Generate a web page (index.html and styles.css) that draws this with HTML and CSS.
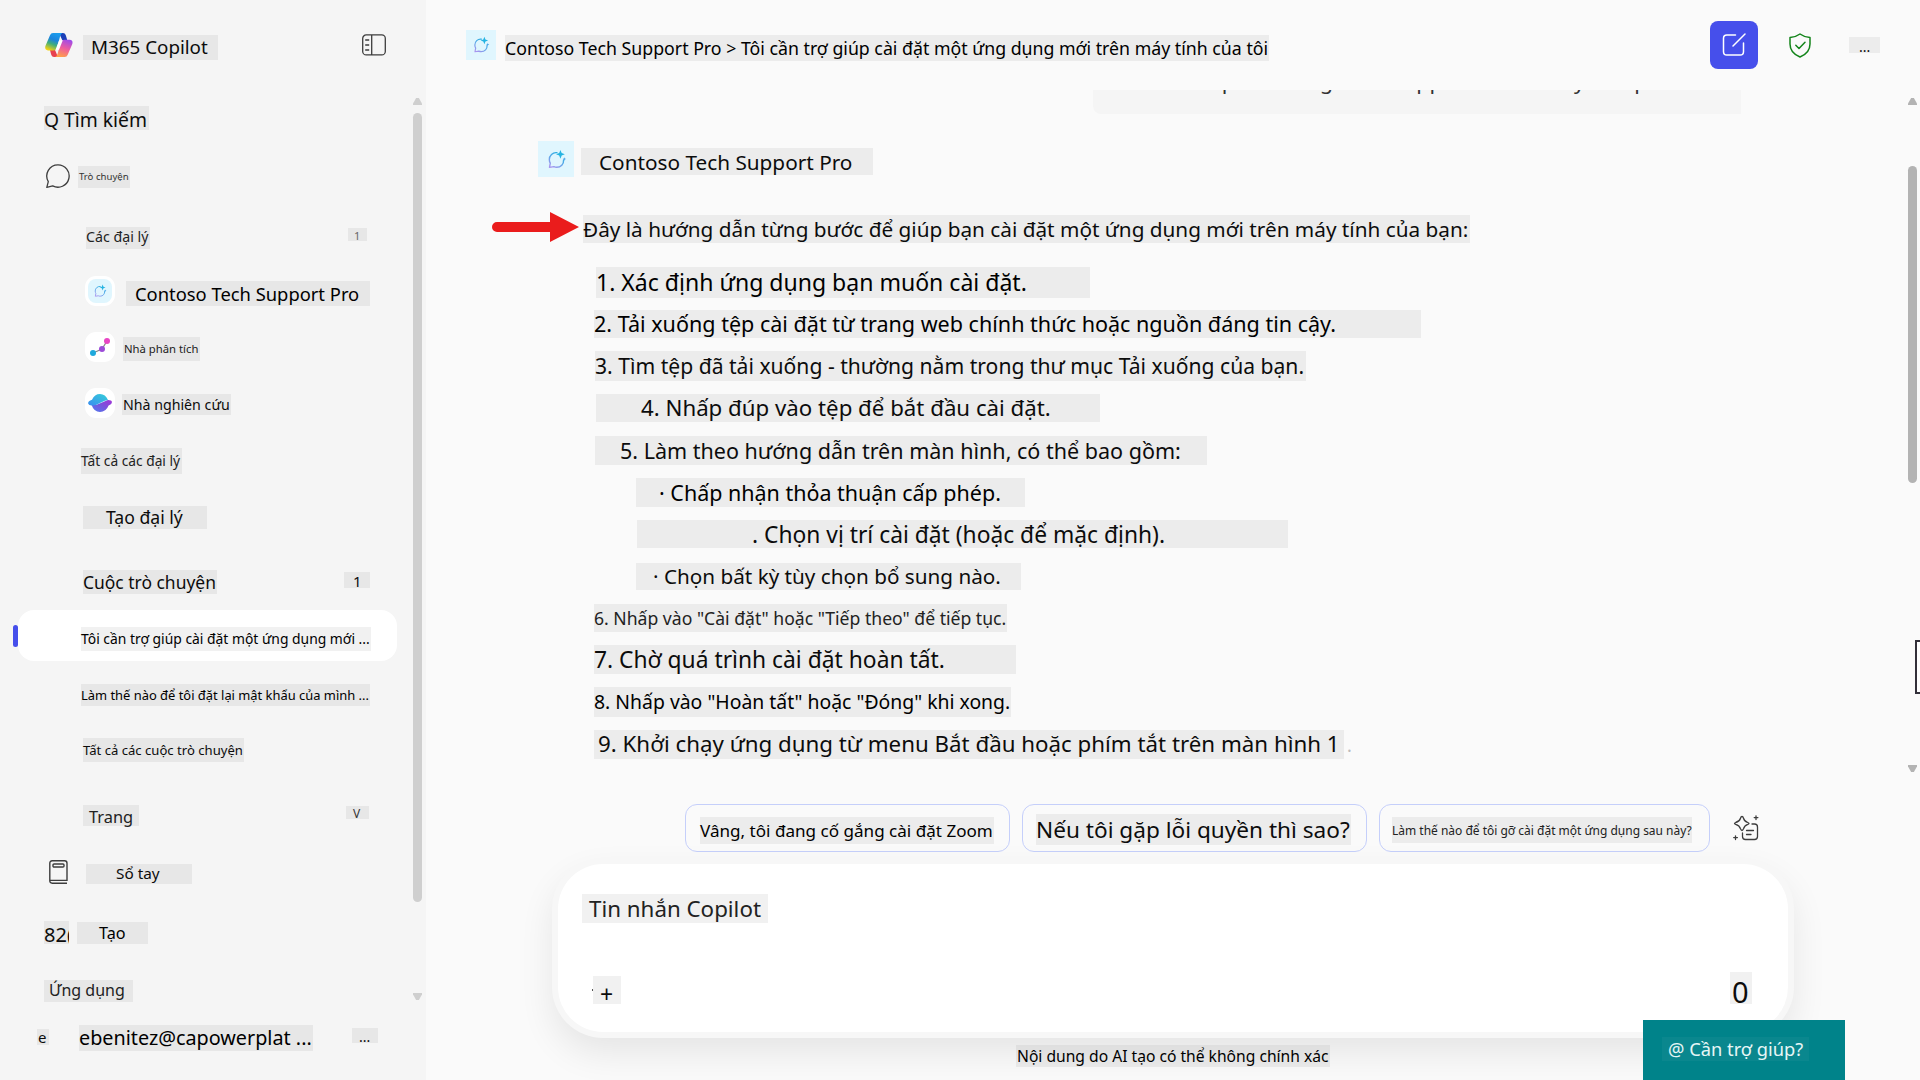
FILE: index.html
```html
<!DOCTYPE html>
<html lang="vi">
<head>
<meta charset="utf-8">
<title>M365 Copilot</title>
<link rel="stylesheet" href="styles.css">
</head>
<body>
<svg class="defs" width="0" height="0">
  <defs>
    <linearGradient id="g-left" x1="0.7" y1="0" x2="0.3" y2="1">
      <stop offset="0" stop-color="#1a9fee"/><stop offset=".4" stop-color="#1c84dd"/><stop offset=".65" stop-color="#3fae7c"/><stop offset="1" stop-color="#f2d212"/>
    </linearGradient>
    <linearGradient id="g-right" x1="0.7" y1="0" x2="0.35" y2="1">
      <stop offset="0" stop-color="#a04be8"/><stop offset=".5" stop-color="#ee5d9e"/><stop offset="1" stop-color="#ffa04a"/>
    </linearGradient>
    <linearGradient id="g-chat" x1="0.8" y1="0" x2="0.2" y2="1">
      <stop offset="0" stop-color="#1fb0df"/><stop offset=".5" stop-color="#58a8e8"/><stop offset="1" stop-color="#a795ee"/>
    </linearGradient>
    <linearGradient id="g-cap" x1="0" y1="1" x2="1" y2="0">
      <stop offset="0" stop-color="#3a8df0"/><stop offset="1" stop-color="#35d0d8"/>
    </linearGradient>
    <linearGradient id="g-base" x1="0" y1="1" x2="1" y2="0">
      <stop offset="0" stop-color="#4f7df0"/><stop offset=".55" stop-color="#7a52dc"/><stop offset="1" stop-color="#a233d6"/>
    </linearGradient>
    <symbol id="agent-chat" viewBox="0 0 24 24">
      <path d="M12.500 4.200C7.500 3.600 3.800 7.500 3.800 12c0 1.600.4 3 1.100 4.200L4 21l5-.8c1.100.5 2 .7 3.200.7 4.800 0 8.200-3.600 7.900-8.300" fill="none" stroke="url(#g-chat)" stroke-width="1.600" stroke-linecap="round" stroke-linejoin="round"/>
      <path d="M16.500 1l1.400 3.600L21.500 6l-3.600 1.400-1.400 3.600-1.400-3.600L11.500 6l3.600-1.400z" fill="#25b4e2"/>
      <path d="M21 9.300l.6 1.500 1.500.6-1.500.6-.6 1.500-.6-1.500-1.500-.6 1.500-.6z" fill="#4fa6ea"/>
    </symbol>
  </defs>
</svg>

<div class="app">
  <aside class="sidebar">
    <div class="row brand">
      <svg class="logo" width="28" height="25" viewBox="0 0 28 25">
        <path d="M14 0h4q2 0 2.700 2l1.500 5h-5z" fill="#1b3fb8"/>
        <path d="M13 24H9q-2 0-2.700-2L5 17h5z" fill="#e8414f"/>
        <path d="M5 2.300Q5.800 0 8 0h9.500q-1.600.5-2.300 3L12 14.500Q11 17.500 8.500 17.500H3Q-.6 17 .4 13z" fill="url(#g-left)"/>
        <path d="M22.700 21.700Q21.900 24 19.700 24h-9.500q1.600-.5 2.300-3l3.200-11.500Q16.700 6.800 19.200 6.800h5.500q3.600.2 2.600 4.200z" fill="url(#g-right)"/>
        <path d="M17.700 7.500L14 16.800h-3.500l3.600-9.300z" fill="#fff"/>
      </svg>
      <span class="label t-brand">M365 Copilot</span>
      <svg class="panel-icon" width="24" height="22" viewBox="0 0 24 22" fill="none" stroke="#3d3d3d" stroke-width="1.300">
        <rect x=".7" y=".9" width="22.600" height="20" rx="3.500"/><path d="M9.700 1v20M3.200 6h4M3.200 11h4M3.200 16h4"/>
      </svg>
    </div>
    <div class="row search"><span class="label t-search">Q Tìm kiếm</span></div>
    <div class="row chat">
      <svg class="chat-icon" width="24" height="24" viewBox="0 0 24 24" fill="none" stroke="#3d3d3d" stroke-width="1.300" stroke-linejoin="round">
        <path d="M12 .8a11.200 11.200 0 1 1-5.300 21.100L.8 23.300l1.500-5.700A11.200 11.200 0 0 1 12 .8z"/>
      </svg>
      <span class="label t-chat">Trò chuyện</span>
    </div>
    <div class="row agents"><span class="label t-agents">Các đại lý</span><span class="label t-agents-n">1</span></div>
    <div class="row agent">
      <span class="avatar"><span class="avatar-tint"><svg width="14" height="14"><use href="#agent-chat"/></svg></span></span>
      <span class="label t-contoso">Contoso Tech Support Pro</span>
    </div>
    <div class="row agent">
      <span class="avatar"><svg width="22" height="22" viewBox="0 0 22 22">
        <path d="M4 17l9-4 5-8" fill="none" stroke="#888" stroke-width="1.300"/>
        <circle cx="4" cy="17" r="3" fill="#1fa9dc"/><circle cx="13" cy="13" r="3" fill="#9c4bd8"/><circle cx="18" cy="5" r="3" fill="#e944c4"/>
      </svg></span>
      <span class="label t-analyst">Nhà phân tích</span>
    </div>
    <div class="row agent">
      <span class="avatar"><svg width="24" height="20" viewBox="0 0 24 20">
        <path d="M3.600 12Q6 19 12 19t8.600-6.500Q24 11 23.900 9q-.3-2-4-1.900L8 12z" fill="url(#g-base)"/>
        <path d="M20 7Q17.500 1 12 1T4 6.800Q0 8 .1 10.500.8 13 5 12.500 9 12 13 9.500T20 7z" fill="url(#g-cap)"/>
      </svg></span>
      <span class="label t-research">Nhà nghiên cứu</span>
    </div>
    <div class="row all-agents"><span class="label t-all-agents">Tất cả các đại lý</span></div>
    <div class="row create-agent"><span class="label t-create-agent">Tạo đại lý</span></div>
    <div class="row convos"><span class="label t-convos">Cuộc trò chuyện</span><span class="label t-convos-n">1</span></div>
    <div class="row selected">
      <span class="marker"></span>
      <div class="pill"><span class="label t-selected">Tôi cần trợ giúp cài đặt một ứng dụng mới ...</span></div>
    </div>
    <div class="row convo"><span class="label t-convo">Làm thế nào để tôi đặt lại mật khẩu của mình ...</span></div>
    <div class="row all-convos"><span class="label t-all-convos">Tất cả các cuộc trò chuyện</span></div>
    <div class="row pages"><span class="label t-pages">Trang</span><span class="label t-pages-v">V</span></div>
    <div class="row notebook">
      <svg class="book-icon" width="19" height="24" viewBox="0 0 19 24" fill="none" stroke="#3d3d3d" stroke-width="1.400">
        <path d="M18 23.200H3.200Q.8 23.200.8 20.800V3.200Q.8.800 3.200.8h12.400q2.400 0 2.400 2.400v17.200H1"/><rect x="4" y="4" width="11" height="3" rx="1"/>
      </svg>
      <span class="label t-notebook">Sổ tay</span>
    </div>
    <div class="row create"><span class="label t-create-n">82(</span><span class="label t-create">Tạo</span></div>
    <div class="row apps"><span class="label t-apps">Ứng dụng</span></div>
    <div class="row user"><span class="label t-user-e">e</span><span class="label t-user">ebenitez@capowerplat ...</span><span class="label t-user-more">...</span></div>
    <div class="scroll scroll-side"><i class="up"></i><i class="thumb"></i><i class="down"></i></div>
  </aside>

  <main class="main">
    <header class="header">
      <span class="tile tile-sm"><svg width="18" height="18"><use href="#agent-chat"/></svg></span>
      <span class="label t-crumb">Contoso Tech Support Pro &gt; Tôi cần trợ giúp cài đặt một ứng dụng mới trên máy tính của tôi</span>
      <button class="new-chat" aria-label="Trò chuyện mới">
        <svg width="24" height="24" viewBox="0 0 24 24" fill="none" stroke="#fff" stroke-width="1.500" stroke-linecap="round">
          <path d="M13.500 2H4.800Q1.500 2 1.500 5.300v13.400Q1.500 22 4.800 22h13.400q3.300 0 3.300-3.300V10M11 13L23 1"/>
        </svg>
      </button>
      <svg class="shield" width="22" height="25" viewBox="0 0 22 25" fill="none" stroke="#13841a" stroke-width="1.500" stroke-linejoin="round" stroke-linecap="round">
        <path d="M11 1Q15.500 4.300 21 4.500V11q0 9-10 13Q1 20 1 11V4.500Q6.500 4.300 11 1zM6.800 12.300l3.200 3.200 6-6.300"/>
      </svg>
      <span class="label t-more">...</span>
    </header>

    <section class="thread">
      <div class="bubble"><p class="bubble-text">I need help installing a new application on my computer</p></div>
      <div class="line l-agent">
        <span class="tile tile-lg"><svg width="21" height="21"><use href="#agent-chat"/></svg></span>
        <span class="label t-agent">Contoso Tech Support Pro</span>
      </div>
      <div class="line l-intro">
        <svg class="arrow" width="87" height="32" viewBox="0 0 87 32"><path d="M5 10h53V0l29 15-29 15V20H5a5 5 0 0 1 0-10z" fill="#ea1c1c"/></svg>
        <span class="label t-intro">Đây là hướng dẫn từng bước để giúp bạn cài đặt một ứng dụng mới trên máy tính của bạn:</span>
      </div>
      <div class="line l-1"><span class="label t-1">1. Xác định ứng dụng bạn muốn cài đặt.</span></div>
      <div class="line l-2"><span class="label t-2">2. Tải xuống tệp cài đặt từ trang web chính thức hoặc nguồn đáng tin cậy.</span></div>
      <div class="line l-3"><span class="label t-3">3. Tìm tệp đã tải xuống - thường nằm trong thư mục Tải xuống của bạn.</span></div>
      <div class="line l-4"><span class="label t-4">4. Nhấp đúp vào tệp để bắt đầu cài đặt.</span></div>
      <div class="line l-5"><span class="label t-5">5. Làm theo hướng dẫn trên màn hình, có thể bao gồm:</span></div>
      <div class="line l-5a"><span class="label t-5a">· Chấp nhận thỏa thuận cấp phép.</span></div>
      <div class="line l-5b"><span class="label t-5b">. Chọn vị trí cài đặt (hoặc để mặc định).</span></div>
      <div class="line l-5c"><span class="label t-5c">· Chọn bất kỳ tùy chọn bổ sung nào.</span></div>
      <div class="line l-6"><span class="label t-6">6. Nhấp vào "Cài đặt" hoặc "Tiếp theo" để tiếp tục.</span></div>
      <div class="line l-7"><span class="label t-7">7. Chờ quá trình cài đặt hoàn tất.</span></div>
      <div class="line l-8"><span class="label t-8">8. Nhấp vào "Hoàn tất" hoặc "Đóng" khi xong.</span></div>
      <div class="line l-9"><span class="label t-9">9. Khởi chạy ứng dụng từ menu Bắt đầu hoặc phím tắt trên màn hình 1</span><span class="stop">.</span></div>
    </section>

    <div class="chips">
      <div class="chip c1"><span class="label t-c1">Vâng, tôi đang cố gắng cài đặt Zoom</span></div>
      <div class="chip c2"><span class="label t-c2">Nếu tôi gặp lỗi quyền thì sao?</span></div>
      <div class="chip c3"><span class="label t-c3">Làm thế nào để tôi gỡ cài đặt một ứng dụng sau này?</span></div>
      <svg class="prompt-icon" width="26" height="26" viewBox="0 0 26 26" fill="none" stroke="#3d3d3d" stroke-width="1.300" stroke-linejoin="round" stroke-linecap="round">
        <path d="M9 1.500Q10 1.500 10.500 3.200c.8 2.700 1.500 3.500 4.300 4.300q2.400.9 0 1.900c-2.800.9-3.500 1.700-4.300 4.400q-1.500 3.400-3 0c-.8-2.700-1.500-3.500-4.800-4.400q-2.400-1 0-1.900c3.300-.8 4-1.600 4.800-4.300Q8 1.500 9 1.500zM19 9h2.500Q24.500 9 24.500 12v9.500q0 3-3 3h-9q-3 0-3-3V18M13.500 15.500h7M13.500 19.500h4.500M23 .8v3.700M21.200 2.600h3.700M2.500 20.800v3.700M.7 22.600h3.700"/>
      </svg>
    </div>

    <div class="composer">
      <span class="label t-input">Tin nhắn Copilot</span>
      <div class="tools"><span class="dot"></span><span class="label t-plus">+</span><span class="label t-zero">0</span></div>
    </div>
    <div class="note"><span class="label t-note">Nội dung do AI tạo có thể không chính xác</span></div>

    <div class="scroll scroll-main"><i class="up"></i><i class="thumb"></i><i class="down"></i></div>
    <div class="side-handle"></div>
    <div class="help"><span class="label t-help">@ Cần trợ giúp?</span></div>
  </main>
</div>
</body>
</html>
```
FILE: styles.css
```css
* { box-sizing: border-box; }
body {
  margin: 0;
  width: 1920px;
  height: 1080px;
  overflow: hidden;
  font-family: "Noto Sans", "Open Sans", sans-serif;
  color: #0c0c0c;
  background: #fafafa;
}
.defs { position: absolute; }
svg { display: block; flex: none; }
.app { display: flex; height: 1080px; }

/* Shaded text label: --w/--h box, --p text inset, --f size, --b baseline from the top */
.label {
  --p: 1px;
  display: block;
  flex: none;
  width: var(--w);
  height: var(--h);
  padding-left: var(--p);
  font-size: var(--f);
  line-height: calc((var(--b) - .388 * var(--f)) * 2);
  white-space: nowrap;
  background: rgba(0, 0, 0, .056);
}

/* Sidebar */
.sidebar {
  position: relative;
  display: flex;
  flex-direction: column;
  flex: none;
  width: 426px;
  padding-top: 33px;
  background: #f5f5f5;
}
.row { display: flex; align-items: flex-start; flex: none; }
.brand { height: 27px; padding-left: 45px; }
.panel-icon { margin: 1px 0 0 144px; }
.t-brand { --w: 135px; --h: 25px; --p: 8px; --f: 18.8px; --b: 19.500px; margin: 2px 0 0 10px; }
.search { height: 24px; margin-top: 46px; padding-left: 44px; }
.t-search { --w: 105px; --h: 24px; --p: 0px; --f: 19.3px; --b: 21px; }
.chat { height: 24px; margin-top: 34px; padding-left: 46px; }
.t-chat { --w: 52px; --h: 22px; --f: 9.600px; --b: 14.500px; margin: 2px 0 0 8px; color: #333; }
.agents { height: 22px; margin-top: 39px; padding-left: 86px; }
.t-agents { --w: 64px; --h: 22px; --p: 0px; --f: 14.2px; --b: 16px; color: #222; }
.t-agents-n { --w: 19px; --h: 13px; --p: 6px; --f: 11px; --b: 12px; margin: 1px 0 0 198px; color: #666; }
.agent { height: 30px; margin-top: 26px; padding-left: 85px; }
.agents + .agent { margin-top: 27px; }
.avatar { display: flex; align-items: center; justify-content: center; width: 30px; height: 30px; border-radius: 11px; background: #fff; }
.avatar-tint { display: flex; align-items: center; justify-content: center; width: 24px; height: 24px; border-radius: 8px; background: #e0f6fe; }
.t-contoso { --w: 244px; --h: 25px; --p: 9px; --f: 18.360px; --b: 20px; margin: 5px 0 0 11px; color: #000; }
.t-analyst { --w: 77px; --h: 24px; --f: 11.300px; --b: 16px; margin: 5px 0 0 8px; color: #222; }
.t-research { --w: 109px; --h: 21px; --f: 14.200px; --b: 17px; margin: 6px 0 0 7px; }
.all-agents { height: 26px; margin-top: 30px; padding-left: 81px; }
.t-all-agents { --w: 101px; --h: 26px; --p: 0px; --f: 13.760px; --b: 18px; color: #222; }
.create-agent { height: 23px; margin-top: 32px; padding-left: 83px; }
.t-create-agent { --w: 124px; --h: 23px; --p: 23px; --f: 17.600px; --b: 18.500px; }
.convos { height: 24px; margin-top: 41px; padding-left: 83px; }
.t-convos { --w: 134px; --h: 24px; --p: 0px; --f: 17.450px; --b: 19px; }
.t-convos-n { --w: 26px; --h: 16px; --p: 9px; --f: 15px; --b: 15px; margin: 2px 0 0 127px; }
.selected { height: 51px; margin-top: 16px; padding-left: 13px; align-items: center; }
.marker { width: 5px; height: 22px; border-radius: 3px; background: #464feb; }
.pill { display: flex; align-items: center; width: 379px; height: 51px; padding: 6px 0 0 63px; border-radius: 16px; background: #fff; }
.t-selected { --w: 290px; --h: 24px; --p: 0px; --f: 13.880px; --b: 17px; color: #000; }
.convo { height: 22px; margin-top: 23px; padding-left: 81px; }
.t-convo { --w: 289px; --h: 22px; --p: 0px; --f: 12.910px; --b: 16.500px; color: #000; }
.all-convos { height: 24px; margin-top: 32px; padding-left: 83px; }
.t-all-convos { --w: 161px; --h: 24px; --p: 0px; --f: 13.100px; --b: 17.500px; }
.pages { height: 21px; margin-top: 43px; padding-left: 83px; }
.t-pages { --w: 56px; --h: 21px; --p: 6px; --f: 16.400px; --b: 18px; color: #222; }
.t-pages-v { --w: 23px; --h: 13px; --p: 7px; --f: 12px; --b: 12.500px; margin: 1px 0 0 207px; color: #333; }
.notebook { height: 24px; margin-top: 34px; padding-left: 49px; }
.t-notebook { --w: 106px; --h: 20px; --p: 30px; --f: 15.300px; --b: 15.500px; margin: 4px 0 0 18px; }
.create { height: 23px; margin-top: 37px; padding-left: 44px; }
.t-create-n { --w: 25px; --h: 23px; --p: 0px; --f: 20px; --b: 21.500px; overflow: hidden; }
.t-create { --w: 71px; --h: 22px; --p: 22px; --f: 16.200px; --b: 18px; margin: 1px 0 0 8px; color: #000; }
.apps { height: 20px; margin-top: 36px; padding-left: 44px; }
.t-apps { --w: 89px; --h: 22px; --p: 5px; --f: 16px; --b: 16.500px; color: #222; }
.user { height: 26px; margin-top: 25px; padding-left: 37px; }
.t-user-e { --w: 12px; --h: 16px; --f: 15px; --b: 14.500px; margin-top: 4px; }
.t-user { --w: 234px; --h: 26px; --p: 0px; --f: 19.800px; --b: 21px; margin-left: 30px; color: #000; }
.t-user-more { --w: 26px; --h: 15px; --p: 7px; --f: 14px; --b: 14px; margin: 3px 0 0 39px; }

/* Scrollbars overlay the panel edges */
.scroll { position: absolute; width: 9px; display: flex; flex-direction: column; color: #cfcfcf; }
.scroll i { display: block; flex: none; }
.up, .down { height: 7px; background: currentColor; clip-path: polygon(35% 0, 65% 0, 100% 80%, 100% 100%, 0 100%, 0 80%); }
.down { clip-path: polygon(0 0, 100% 0, 100% 20%, 65% 100%, 35% 100%, 0 20%); }
.thumb { border-radius: 5px; background: currentColor; }
.scroll-side { left: 413px; top: 98px; }
.scroll-side .thumb { height: 789px; margin: 8px 0 91px; }
.scroll-main { left: 1482px; top: 98px; color: #b3b3b3; }
.scroll-main .thumb { height: 317px; margin: 61px 0 282px; }

/* Main */
.main { position: relative; display: flex; flex-direction: column; width: 1494px; height: 1080px; overflow: hidden; }
.header { display: flex; align-items: flex-start; height: 90px; padding: 21px 0 0 40px; }
.tile { display: flex; align-items: center; justify-content: center; flex: none; background: #e0f6fe; }
.tile-sm { width: 30px; height: 30px; margin-top: 9px; }
.tile-lg { width: 36px; height: 36px; }
.t-crumb { --w: 764px; --h: 26px; --p: 0px; --f: 17.740px; --b: 20.500px; margin: 14px 0 0 9px; color: #000; }
.new-chat { display: flex; align-items: center; justify-content: center; width: 48px; height: 48px; margin-left: 441px; padding: 0; border: 0; border-radius: 8px; background: #464feb; }
.shield { margin: 12px 0 0 31px; }
.t-more { --w: 31px; --h: 16px; --p: 10px; --f: 14px; --b: 15px; margin: 16px 0 0 38px; }

.thread { display: flex; flex-direction: column; height: 700px; overflow: hidden; }
.bubble { flex: none; width: 648px; height: 24px; margin-left: 667px; padding-left: 28px; overflow: hidden; border-radius: 0 0 0 8px; background: #f5f5f5; }
.bubble-text { margin: -24px 0 0; font-size: 21.600px; line-height: 30px; white-space: nowrap; color: #333; }
.line { display: flex; align-items: flex-start; flex: none; }
.l-agent { height: 36px; margin: 27px 0 0 112px; }
.t-agent { --w: 292px; --h: 27px; --p: 18px; --f: 20.750px; --b: 22.500px; margin: 7px 0 0 7px; }
.l-intro { height: 32px; margin: 35px 0 0 66px; }
.t-intro { --w: 887px; --h: 28px; --p: 0px; --f: 20.760px; --b: 23px; margin: 3px 0 0 4px; }
.l-1 { height: 31px; margin: 23px 0 0 170px; }
.t-1 { --w: 494px; --h: 31px; --p: 0px; --f: 23.040px; --b: 24.500px; color: #000; }
.l-2 { height: 28px; margin: 12px 0 0 168px; }
.t-2 { --w: 827px; --h: 28px; --p: 0px; --f: 21.550px; --b: 22.500px; color: #000; }
.l-3 { height: 30px; margin: 13px 0 0 169px; }
.t-3 { --w: 711px; --h: 30px; --p: 0px; --f: 21.110px; --b: 23.500px; }
.l-4 { height: 28px; margin: 13px 0 0 170px; }
.t-4 { --w: 504px; --h: 28px; --p: 45px; --f: 22.260px; --b: 23px; }
.l-5 { height: 29px; margin: 14px 0 0 169px; }
.t-5 { --w: 612px; --h: 29px; --p: 25px; --f: 21.520px; --b: 23.500px; }
.l-5a { height: 29px; margin: 13px 0 0 210px; }
.t-5a { --w: 389px; --h: 29px; --p: 23px; --f: 21.470px; --b: 23px; color: #000; }
.l-5b { height: 28px; margin: 13px 0 0 211px; }
.t-5b { --w: 651px; --h: 28px; --p: 115px; --f: 22.800px; --b: 24px; }
.l-5c { height: 27px; margin: 15px 0 0 210px; }
.t-5c { --w: 385px; --h: 27px; --p: 17px; --f: 20.700px; --b: 22px; }
.l-6 { height: 28px; margin: 14px 0 0 168px; }
.t-6 { --w: 413px; --h: 28px; --p: 0px; --f: 17.600px; --b: 21px; color: #222; }
.l-7 { height: 29px; margin: 13px 0 0 168px; }
.t-7 { --w: 422px; --h: 29px; --p: 0px; --f: 22.820px; --b: 24px; }
.l-8 { height: 30px; margin: 13px 0 0 168px; }
.t-8 { --w: 417px; --h: 30px; --p: 0px; --f: 19.400px; --b: 23px; color: #000; }
.l-9 { height: 29px; margin: 13px 0 0 168px; }
.t-9 { --w: 750px; --h: 29px; --p: 4px; --f: 22.320px; --b: 23px; }
.stop { margin-left: 3px; font-size: 18px; line-height: 31px; color: #bbb; }

.chips { display: flex; align-items: flex-start; height: 48px; margin: 14px 0 0 259px; }
.chip { display: flex; flex: none; height: 48px; border: 1px solid #c5cffa; border-radius: 12px; }
.c1 { width: 325px; padding: 12px 0 0 14px; }
.c2 { width: 345px; margin-left: 12px; padding: 9px 0 0 13px; }
.c3 { width: 331px; margin-left: 12px; padding: 12px 0 0 12px; }
.t-c1 { --w: 294px; --h: 27px; --p: 0px; --f: 17.090px; --b: 20.500px; color: #000; }
.t-c2 { --w: 315px; --h: 31px; --p: 0px; --f: 22.620px; --b: 25px; }
.t-c3 { --w: 300px; --h: 26px; --p: 0px; --f: 11.990px; --b: 18.500px; color: #222; }
.prompt-icon { margin: 11px 0 0 23px; }

.composer {
  display: flex;
  flex-direction: column;
  width: 1230px;
  height: 168px;
  margin: 12px 0 0 132px;
  padding: 30px 0 0 24px;
  border-radius: 45px;
  background: #fff;
  box-shadow: 0 0 0 6px #f7f7f7, 0 16px 36px 4px rgba(0, 0, 0, .09);
}
.t-input { --w: 186px; --h: 29px; --p: 7px; --f: 22.330px; --b: 24px; color: #222; }
.tools { display: flex; align-items: flex-start; height: 32px; margin: 49px 0 0 10px; }
.dot { width: 1px; height: 2px; margin-top: 17px; background: #555; }
.t-plus { --w: 28px; --h: 28px; --p: 7px; --f: 23px; --b: 27px; margin-top: 4px; }
.t-zero { --w: 22px; --h: 32px; --p: 2px; --f: 29px; --b: 31px; margin-left: 1109px; }
.note { display: flex; margin: 13px 0 0 590px; }
.t-note { --w: 314px; --h: 22px; --p: 1px; --f: 15.630px; --b: 18px; position: relative; color: #000; }

/* Floating help button over the composer */
.help { position: absolute; left: 1217px; top: 1020px; width: 202px; height: 60px; padding: 17px 0 0 19px; background: #00838a; color: #e6f6f6; }
.t-help { --w: 147px; --h: 24px; --p: 6px; --f: 18.300px; --b: 19.500px; background: rgba(255, 255, 255, .04); }
.side-handle { position: absolute; left: 1489px; top: 640px; width: 8px; height: 54px; border: 2px solid #33303a; background: #fff; }
```
